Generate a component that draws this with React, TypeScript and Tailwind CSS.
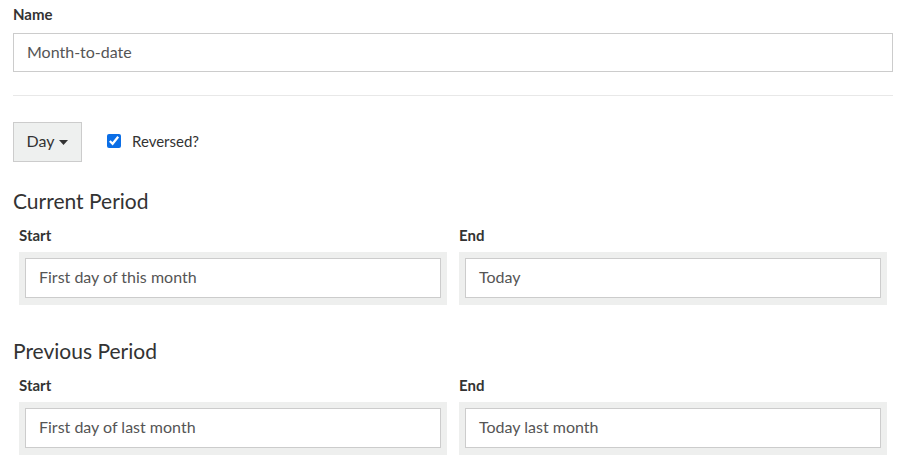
import React from "react";

function Field({ label, value }: { label: string; value: string }) {
  return (
    <div className="flex flex-col">
      <div className="text-[15px] leading-[20px] font-bold text-[#333] mb-[7px]">{label}</div>
      <div className="bg-[#eeefee] p-[6px] pb-[7px]">
        <div className="h-[40px] bg-white border border-[#cccccc] flex items-center pl-[13px] pb-[2px] text-[16px] text-[#555]">
          {value}
        </div>
      </div>
    </div>
  );
}

function Period({ title, start, end, mt }: { title: string; start: string; end: string; mt: string }) {
  return (
    <div className={mt}>
      <div className="text-[21px] leading-[28px] text-[#333]">{title}</div>
      <div className="grid grid-cols-2 gap-[12px] px-[6px] mt-[10px]">
        <Field label="Start" value={start} />
        <Field label="End" value={end} />
      </div>
    </div>
  );
}

export default function App() {
  return (
    <div className="pl-[13px] pr-[4px] pt-[4px] bg-white min-h-[468px]" style={{ fontFamily: "Lato, 'Open Sans', sans-serif" }}>
      <div className="text-[15px] leading-[20px] font-bold text-[#333] mb-[9px]">Name</div>
      <div className="h-[39px] border border-[#cccccc] flex items-center pl-[13px] pb-[2px] text-[16px] text-[#555]">
        Month-to-date
      </div>
      <div className="mt-[23px] h-px bg-[#e8e8e8]" />
      <div className="mt-[26px] flex items-center">
        <button className="h-[40px] w-[69px] bg-[#eef0ef] border border-[#cccccc] flex items-center justify-center gap-[5px] text-[16px] text-[#333]">
          <span className="-translate-y-px">Day</span>
          <svg width="9" height="5" viewBox="0 0 9 5"><path d="M0 0 L9 0 L4.5 5 Z" fill="#333" /></svg>
        </button>
        <label className="ml-[25px] flex items-center gap-[11px] text-[15px] text-[#333]">
          <input type="checkbox" defaultChecked className="w-[14px] h-[14px] accent-[#0b6ee6] -translate-y-px" />
          <span className="-translate-y-px">Reversed?</span>
        </label>
      </div>
      <Period title="Current Period" start="First day of this month" end="Today" mt="mt-[25px]" />
      <Period title="Previous Period" start="First day of last month" end="Today last month" mt="mt-[32px]" />
    </div>
  );
}
